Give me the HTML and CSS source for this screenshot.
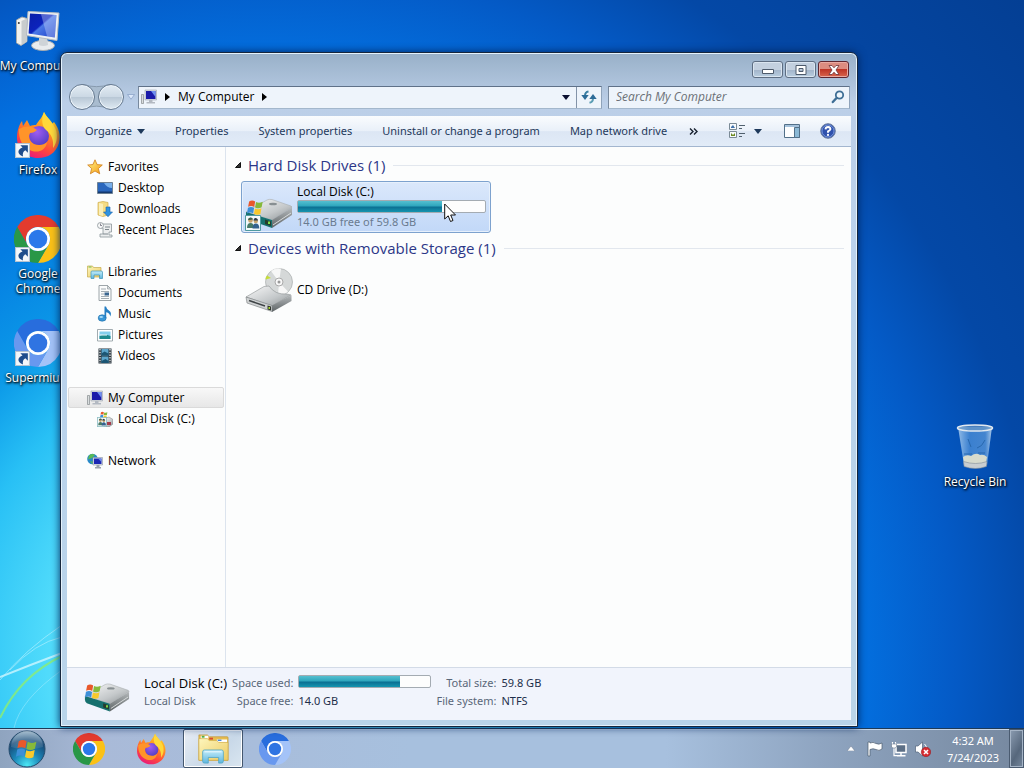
FILE: index.html
```html
<!DOCTYPE html>
<html lang="en">
<head>
<meta charset="utf-8">
<title>My Computer</title>
<link rel="stylesheet" href="styles.css">
</head>
<body>
<svg class="sprites" aria-hidden="true">
  <defs>
    <linearGradient id="g-screen" x1="0" y1="0" x2="1" y2="1"><stop offset="0" stop-color="#0a1fa8"/><stop offset=".45" stop-color="#0c23bd"/><stop offset=".5" stop-color="#4a78e6"/><stop offset="1" stop-color="#1b3cc8"/></linearGradient>
    <linearGradient id="g-metal" x1="0" y1="0" x2="1" y2="1"><stop offset="0" stop-color="#fafafa"/><stop offset=".6" stop-color="#c4c8ca"/><stop offset="1" stop-color="#8d9294"/></linearGradient>
    <linearGradient id="g-dark" x1="0" y1="0" x2="0" y2="1"><stop offset="0" stop-color="#b5b9bb"/><stop offset="1" stop-color="#5d6365"/></linearGradient>
    <linearGradient id="g-fox" x1=".8" y1="0" x2=".3" y2="1"><stop offset="0" stop-color="#ffe226"/><stop offset=".35" stop-color="#ff9a1f"/><stop offset=".7" stop-color="#ff4a3a"/><stop offset="1" stop-color="#e8187c"/></linearGradient>
    <radialGradient id="g-globe" cx=".4" cy=".3" r=".8"><stop offset="0" stop-color="#a05cf0"/><stop offset="1" stop-color="#4a3cc0"/></radialGradient>
    <radialGradient id="g-orb" cx=".5" cy=".95" r=".95"><stop offset="0" stop-color="#4ce8f5"/><stop offset=".4" stop-color="#1b86b8"/><stop offset=".75" stop-color="#174b78"/><stop offset="1" stop-color="#5c88a8"/></radialGradient>
    <linearGradient id="g-gloss" x1="0" y1="0" x2="0" y2="1"><stop offset="0" stop-color="#fff" stop-opacity=".75"/><stop offset="1" stop-color="#fff" stop-opacity=".1"/></linearGradient>
    <linearGradient id="g-folder" x1="0" y1="0" x2="1" y2="1"><stop offset="0" stop-color="#fdf6bd"/><stop offset="1" stop-color="#eccb63"/></linearGradient>
    <linearGradient id="g-tray" x1="0" y1="0" x2="0" y2="1"><stop offset="0" stop-color="#c3edfa"/><stop offset="1" stop-color="#5fb6dd"/></linearGradient>
    <linearGradient id="g-star" x1="0" y1="0" x2="1" y2="1"><stop offset="0" stop-color="#fff58a"/><stop offset="1" stop-color="#f59a12"/></linearGradient>
    <linearGradient id="g-bin" x1="0" y1="0" x2="1" y2="0"><stop offset="0" stop-color="#c3dff6" stop-opacity=".75"/><stop offset=".35" stop-color="#5f9fe0" stop-opacity=".6"/><stop offset=".8" stop-color="#6faae4" stop-opacity=".6"/><stop offset="1" stop-color="#d4e8f8" stop-opacity=".8"/></linearGradient>
    <symbol id="flag" viewBox="0 0 20 20">
      <path fill="#e8582b" d="M2.5 3Q6 .6 9.6 3L8.500 9.400Q5 7.300 1.300 9.200Z"/><path fill="#86b93a" d="M10.600 3.500Q14 5.500 18.500 3.300L17.200 9.800Q13.500 12 9.500 9.900Z"/>
      <path fill="#3d8fd8" d="M1.100 10.400Q5 8.500 8.300 10.600L7.200 17Q4 15 0 17Z"/><path fill="#f8c92c" d="M9.300 11.100Q13 13 17 11L15.800 17.500Q12 19.400 8.200 17.300Z"/>
    </symbol>
    <symbol id="pc" viewBox="0 0 48 48">
      <path fill="#f1f1ee" stroke="#a5a9ab" d="M2.500 13 8 10l5 1.500v23L7 38.500 2.500 36Z"/><path fill="#c8cccd" d="M7.500 14 13 11.500v23l-5.500 3.500Z"/><circle cx="4.800" cy="16" r="1" fill="#333"/>
      <ellipse cx="29" cy="38.500" rx="11.500" ry="5" fill="#e9ecee" stroke="#a5abb0"/><path fill="#cfd4d8" d="M25 30h8l1 8q-5 2-9 0Z"/>
      <path fill="#eef1f3" stroke="#b5bbc2" d="M14 4.500 45 6 43 33.500 12.500 28.500Z"/><path fill="url(#g-screen)" d="M16 6.500 42.500 8 40.800 30.500 14.600 26.600Z"/><path fill="#dce6ff" opacity=".35" d="M27 7.300 42.500 8 40.800 30.500 33 29.300Z"/>
    </symbol>
    <symbol id="pc16" viewBox="0 0 16 16">
      <path fill="#d9ddde" stroke="#858b8e" stroke-width=".7" d="M.5 5.500h2v9h-2Z"/><path fill="#d9dde2" stroke="#9da4b0" stroke-width=".6" d="M4 1h11.500v10H4Z"/><path fill="#1a1aa8" d="M5 2h9.500v8H5Z"/><path fill="#6f8ff0" d="M10 2h4.500v6Z"/><path fill="#b3b9c2" d="M8 11h3.500v2H14v1.500H5.500V13H8Z"/>
    </symbol>
    <symbol id="firefox" viewBox="0 0 48 48">
      <path fill="url(#g-fox)" d="M30 1c2 5 7 8 8 12l2-2c5 7 7 13 5 21-3 10-11 15-21 15C12 47 3 38 3 27c0-7 2-13 5-17l1 5 4-6 3 6c2-1 4-1 6-1 3-5 6-7 8-13Z"/>
      <circle cx="25" cy="25" r="10" fill="url(#g-globe)"/><path fill="#ff9429" d="M5 18c7-4 13-3 18 1-2 2-4 3-7 3-2 3-1 8 4 11 5 2 10 1 13-2-1 8-8 11-15 9C9 37 4 28 5 18Z"/><path fill="#ffd83a" d="M30 1c2 5 8 9 10 14 5 8 3 17-1 22 1-9-2-14-7-18-4-4-5-10-2-18Z"/>
    </symbol>
    <symbol id="chrome" viewBox="0 0 48 48">
      <path fill="#e33b2e" d="M3.200 12A24 24 0 0 1 44.800 12H24A12 12 0 0 0 13.600 30Z"/><path fill="#fbc116" d="M44.800 12A24 24 0 0 1 24 48L34.400 30A12 12 0 0 0 24 12Z"/><path fill="#299747" d="M24 48A24 24 0 0 1 3.200 12L13.600 30A12 12 0 0 0 34.400 30Z"/><circle cx="24" cy="24" r="12" fill="#fff"/><circle cx="24" cy="24" r="9.300" fill="#2b78ea"/>
    </symbol>
    <symbol id="supermium" viewBox="0 0 48 48">
      <path fill="#286ddd" d="M3.200 12A24 24 0 0 1 44.800 12H24A12 12 0 0 0 13.600 30Z"/><path fill="#a4c3f8" d="M44.800 12A24 24 0 0 1 24 48L34.400 30A12 12 0 0 0 24 12Z"/><path fill="#6898ef" d="M24 48A24 24 0 0 1 3.200 12L13.600 30A12 12 0 0 0 34.400 30Z"/><circle cx="24" cy="24" r="12" fill="#fff"/><circle cx="24" cy="24" r="9.300" fill="#2f74e2"/>
    </symbol>
    <symbol id="shortcut" viewBox="0 0 14 14"><path fill="#f4f7fa" stroke="#b5c3d0" d="M.5.5h13v13H.5Z"/><path fill="#1f4d8c" d="M5 2h7v7L9.700 6.700Q6.500 8.500 7.500 12.500 3 11 3.200 8 3.500 5.500 7 4.200Z"/></symbol>
    <symbol id="drive" viewBox="0 0 48 32">
      <path fill="url(#g-metal)" stroke="#a8adaf" stroke-width=".6" d="M1 15 22 3q2-1 5-.5L46 9q2 1 0 2L27 23Z"/><path fill="#16706e" d="M1 15 27 23v8L3 22.500Q1 21 1 19Z"/><path fill="url(#g-dark)" d="M27 23 47 10.500V18L27 31Z"/><path fill="#263c2d" d="M20 22.500l6 2v4.500l-6-2Z"/><path fill="#7fe04a" d="M23 24.500h2v2.500h-2Z"/><ellipse cx="28" cy="7" rx="4" ry="1.300" fill="#888f92"/><path fill="none" stroke="#d9dcdd" d="M28 28 46 16"/>
    </symbol>
    <symbol id="users" viewBox="0 0 16 16"><path fill="#f4f9fb" stroke="#4f9aa0" d="M.5.500h15v15H.5Z"/><circle cx="5.500" cy="5.500" r="2.300" fill="#c7a46e"/><path fill="#47604a" d="M3 5q0-3 3-2.500 2 .5 2 2L5 5Z"/><path fill="#487a68" d="M2 13q0-5 3.500-5T9 13Z"/><circle cx="10.800" cy="6" r="2.200" fill="#c7a46e"/><path fill="#2d3c48" d="M8.500 5.500q0-3 2.500-2.500 2 .5 2 2.500Z"/><path fill="#34628e" d="M7.500 13.500q0-5 3.400-5t3.400 5Z"/></symbol>
    <symbol id="cd" viewBox="0 0 48 48">
      <circle cx="34" cy="16" r="13.500" fill="#d5d8d8" stroke="#a9adae" stroke-width=".7"/><path fill="#fff" opacity=".8" d="M34 16 26 5q5-4 10-2.300ZM34 16l9 9.500q-4 4-10 4Z"/><path fill="#c5de36" d="M26 12 22 9.500q-1.500 2-1.500 4Z"/><circle cx="34" cy="16" r="4" fill="#f8f8f8" stroke="#aaa"/><circle cx="34" cy="16" r="1.500" fill="#999"/>
      <path fill="url(#g-metal)" stroke="#8b9092" stroke-width=".6" d="M1 31 19 20.500l5-.5Q30 29 42 28l4 1-19 11Z"/><path fill="#cfd2d3" stroke="#777c7e" stroke-width=".6" d="M1 31 27 39.500v6L2 37Z"/><path fill="url(#g-dark)" d="M27 39.500 46.500 29v6L27 46Z"/><path stroke="#3e4345" stroke-width="1.500" d="M4 34.500 20 40"/><path fill="#30362f" d="M22.500 39.500l3.500 1v4l-3.500-1Z"/><path fill="#a8d92c" d="M23.500 41h1.500v2h-1.500Z"/>
    </symbol>
    <symbol id="star" viewBox="0 0 16 16"><path fill="url(#g-star)" stroke="#cf7d19" stroke-width=".8" d="M8 .8 10.100 5.600 15.300 6 11.400 9.500 12.700 14.800 8 12 3.400 14.800 4.600 9.500.7 6l5.200-.4Z"/></symbol>
    <symbol id="desktop" viewBox="0 0 16 16"><path fill="#2a67bd" stroke="#6d8194" d="M.5 2.500h15v11H.5Z"/><path fill="#78afea" d="M7 3h8v5Q10 8 7 3Z"/><path fill="#14396f" d="M1 11.500h14V13H1Z"/></symbol>
    <symbol id="downloads" viewBox="0 0 16 16"><path fill="#f5dc84" stroke="#cfac4a" stroke-width=".7" d="M1 1.500 6 .5l5 1V14l-5 1.500L1 14Z"/><path fill="#fbefb9" d="M2 2 6 3v12l-4-1Z"/><path fill="#2f93e0" stroke="#1a62ad" stroke-width=".6" d="M9 6h4v5h2.500L11 15.700 6.500 11H9Z"/></symbol>
    <symbol id="recent" viewBox="0 0 16 16"><path fill="#eceeef" stroke="#8b9499" stroke-width=".8" d="M5 2h9.500v8H12v3h3v2H3v-3h3V6H4Z"/><path stroke="#7d878d" d="M8 5h5M8 7.500h4M6 12h5"/><circle cx="3.500" cy="3.500" r="3" fill="#f7f8f8" stroke="#8b9499" stroke-width=".8"/><path fill="none" stroke="#556" stroke-width=".7" d="M3.500 1.500v2h1.500"/></symbol>
    <symbol id="library" viewBox="0 0 16 16"><path fill="url(#g-folder)" stroke="#c5aa4d" stroke-width=".7" d="M.5 2h5l1 1.500H14V13H.5Z"/><path fill="#6dbb45" d="M1.500 2.500h3v1h-3Z"/><path fill="url(#g-tray)" stroke="#3d94b8" stroke-width=".7" d="M4 8q0-1 1-1h9q1.500 0 1.500 1v6.500h-3V11H7v3.500H4Z"/></symbol>
    <symbol id="document" viewBox="0 0 16 16"><path fill="#fbfcfc" stroke="#858f94" stroke-width=".8" d="M2 .5h8.500L14 4v11.500H2Z"/><path fill="#dde1e3" stroke="#858f94" stroke-width=".6" d="M10.500.5V4H14Z"/><path stroke="#8d989f" stroke-width=".8" d="M4 4h5M4 6.500h8M4 9h3M4 11.500h8M4 13.500h8"/><path fill="#39658f" d="M7.500 7.500H12v3H7.500Z"/></symbol>
    <symbol id="music" viewBox="0 0 16 16"><ellipse cx="5.200" cy="12" rx="4" ry="3.200" fill="#3a98d8" stroke="#1e6da8" stroke-width=".6"/><path fill="#257fc4" d="M7.500.5H9q.5 3 3.500 4.500 2.500 2 .7 5.500Q13 7 9.200 6.200V12H7.500Z"/><ellipse cx="4.200" cy="11" rx="1.800" ry="1" fill="#a8dcf8"/></symbol>
    <symbol id="picture" viewBox="0 0 16 16"><path fill="#fff" stroke="#8a979d" stroke-width=".8" d="M.5 2.500h15v11.500H.5Z"/><path fill="#84cfec" d="M2.500 4.500h11v7.500h-11Z"/><path fill="#1d8a8e" d="M2.500 9Q7 6.500 13.500 9v3h-11Z"/><path fill="#eef8fa" d="M3 7.500h7v1H3Z"/></symbol>
    <symbol id="video" viewBox="0 0 16 16"><path fill="#27323a" d="M1.500.5h13v15h-13Z"/><path fill="#5ca5cb" d="M4.500 1h7v6.500h-7ZM4.500 8.500h7V15h-7Z"/><path fill="#1c5674" d="M4.500 5.500l3-2 4 2v2h-7ZM4.500 13l4-2 3 2v2h-7Z"/><path stroke="#e5eaec" stroke-width="1.300" stroke-dasharray="1.500 1.200" d="M3 1v14M13 1v14"/></symbol>
    <symbol id="disk16" viewBox="0 0 16 16"><use href="#flag" x="3" width="8" height="8"/><path fill="url(#g-metal)" stroke="#7d8385" stroke-width=".5" d="M6 8l6-2 4 2.500V13l-4 3H7Z"/><path fill="#a63c4a" d="M10 11h4v3h-4Z"/><use href="#users" y="6" width="10" height="10"/></symbol>
    <symbol id="network" viewBox="0 0 16 16"><circle cx="5.500" cy="6" r="5.300" fill="#2688c8"/><path fill="#59b955" d="M2 2.500Q5 0 8 2L5 5 1 6.500ZM3 8l3 1-1 2Z"/><path fill="#e2e6ea" stroke="#8892a0" stroke-width=".6" d="M6 4.500h9.500V12H6Z"/><path fill="#1c28b5" d="M7 5.500h7.500V11H7Z"/><path fill="#6e8bec" d="M11 5.500h3.500V9Z"/><path fill="#9aa3ad" d="M9.500 12h3v2H14v1.500H8V14h1.500Z"/></symbol>
    <symbol id="bin" viewBox="0 0 48 48">
      <path fill="url(#g-bin)" d="M7 4H41L36 42q-12 6-23 0Z"/><path fill="#e8e4cc" opacity=".9" d="M12 34q4-3 8-1 5-4 9-1 4-1 7 2l-1 6q-11 4-22 0Z"/><path fill="#c9ced1" stroke="#818d99" stroke-width=".6" d="M12.500 38.500q12 4 23.500 0l-.6 5q-11 4-22.300 0Z"/><ellipse cx="24" cy="5" rx="17.500" ry="3" fill="#739dc5" fill-opacity=".6" stroke="#e1e8ef" stroke-width="1.500"/><path stroke="#2868ae" fill="none" d="M17 16l3 8M34 17q-3 7-8 8M13 31h8M27 30h7"/>
    </symbol>
    <symbol id="explorer" viewBox="0 0 34 34"><path fill="#e6bd4f" stroke="#bf9637" stroke-width=".7" d="M2 2h9l2 2h19q1 0 1 1v24H2Z"/><path fill="#fff" d="M4 3h8v3H4ZM21 7h11v3H21Z"/><path fill="#52b043" d="M5 3h3v2H5Z"/><path fill="#d94b2e" d="M13 5h4v2h-4Z"/><path fill="#4a8ad6" d="M22 7h4v1.500h-4Z"/><path fill="url(#g-folder)" stroke="#d1ac46" stroke-width=".7" d="M2 6h9l2 2h8l2 2h10v19H2Z"/><path fill="url(#g-tray)" stroke="#4aa3c6" stroke-width=".8" d="M6 20q0-2 2-2h18q2 0 2 2v10q0 2-2 2h-3v-6H12v6H8q-2 0-2-2Z"/><path stroke="#effbff" d="M8 20h18"/></symbol>
    <symbol id="orb" viewBox="0 0 38 38"><circle cx="19" cy="19" r="18" fill="url(#g-orb)" stroke="#254b6c"/><path fill="url(#g-gloss)" opacity=".6" d="M3 17A16 16 0 0 1 35 17Q19 22 3 17Z"/><use href="#flag" x="8" y="8" width="22" height="22"/></symbol>
  </defs>
</svg>

<main class="desktop">
  <svg class="rays" viewBox="0 0 1024 728" preserveAspectRatio="none" aria-hidden="true">
    <g fill="none"><path stroke="#d8f8ff" stroke-opacity=".75" stroke-width="2" d="M0 677Q30 665 62 653"/><path stroke="#c5f4ff" stroke-opacity=".55" d="M0 680Q25 650 62 625M10 670Q35 643 62 637"/><path stroke="#8cee73" stroke-opacity=".8" stroke-width="2" d="M0 718Q20 676 62 656"/><path stroke="#bff3ff" stroke-opacity=".4" d="M14 728Q20 700 62 670"/></g>
  </svg>

  <nav class="shortcuts" aria-label="Desktop icons">
    <a class="shortcut" href="#"><span class="shortcut-art"><svg><use href="#pc"/></svg></span><span>My Computer</span></a>
    <a class="shortcut" href="#"><span class="shortcut-art"><svg><use href="#firefox"/></svg><svg class="badge"><use href="#shortcut"/></svg></span><span>Firefox</span></a>
    <a class="shortcut" href="#"><span class="shortcut-art"><svg><use href="#chrome"/></svg><svg class="badge"><use href="#shortcut"/></svg></span><span>Google<br>Chrome</span></a>
    <a class="shortcut" href="#"><span class="shortcut-art"><svg><use href="#supermium"/></svg><svg class="badge"><use href="#shortcut"/></svg></span><span>Supermium</span></a>
  </nav>
  <a class="shortcut recycle" href="#"><span class="shortcut-art"><svg><use href="#bin"/></svg></span><span>Recycle Bin</span></a>

  <section class="window" aria-label="My Computer">
    <header class="titlebar">
      <button class="caption" aria-label="Minimize"><svg viewBox="0 0 12 10"><path fill="#fff" stroke="#4d5a6b" d="M.5 4.500h11v4H.5Z"/></svg></button>
      <button class="caption" aria-label="Maximize"><svg viewBox="0 0 12 10"><path fill="#fff" stroke="#4d5a6b" fill-rule="evenodd" d="M1 .5h10v9H1ZM4 3.500v3h4v-3Z"/></svg></button>
      <button class="caption close" aria-label="Close"><svg viewBox="0 0 12 10"><path fill="#fff" stroke="#6b3238" stroke-width=".8" d="M1 .5h3L6 2.800 8 .5h3L8 5l3 4.500H8L6 7.200 4 9.500H1L4 5Z"/></svg></button>
    </header>

    <div class="navbar">
      <div class="travel">
        <svg class="travel-plate" viewBox="0 0 54 27" aria-hidden="true"><path fill="#a9bccf" stroke="#8598ac" d="M13 .5Q27 5 41 .5V26Q27 20 13 26Z"/></svg>
        <button class="travel-btn" aria-label="Back"></button>
        <button class="travel-btn" aria-label="Forward"></button>
      </div>
      <button class="recent-pages" aria-label="Recent pages"><svg viewBox="0 0 8 6"><path fill="#dce9fa" stroke="#8ba3c8" stroke-width=".8" d="M.5.5h7L4 5.300Z"/></svg></button>
      <div class="address">
        <svg class="i16"><use href="#pc16"/></svg>
        <svg class="arrow-right" viewBox="0 0 5 8"><path d="M0 0 5 4 0 8Z"/></svg>
        <button class="crumb">My Computer</button>
        <svg class="arrow-right" viewBox="0 0 5 8"><path d="M0 0 5 4 0 8Z"/></svg>
        <button class="address-drop" aria-label="Previous locations"><svg class="arrow-down" viewBox="0 0 8 5"><path d="M0 0h8L4 5Z"/></svg></button>
        <button class="refresh" aria-label="Refresh"><svg class="i16" viewBox="0 0 16 16"><path fill="none" stroke="#3a7fa3" stroke-width="2" d="M7.500 2.500Q4 3 4 7"/><path fill="#2d6c98" d="M.3 6h7.400L4 11Z"/><path fill="none" stroke="#5b9db4" stroke-width="2" d="M8.500 13.800Q12 13 12 9.500"/><path fill="#2d6c98" d="M8.300 10h7.400L12 5Z"/></svg></button>
      </div>
      <label class="search">
        <input type="search" placeholder="Search My Computer" aria-label="Search My Computer">
        <svg class="i14" viewBox="0 0 14 14"><circle cx="8.500" cy="5" r="3.700" fill="#eef6fc" stroke="#3f6f96" stroke-width="1.800"/><path stroke="#3f6f96" stroke-width="2.400" stroke-linecap="round" d="M5.500 8 1.800 12"/></svg>
      </label>
    </div>

    <div class="toolbar">
      <button>Organize <svg class="arrow-down" viewBox="0 0 8 5"><path d="M0 0h8L4 5Z"/></svg></button>
      <button>Properties</button>
      <button>System properties</button>
      <button>Uninstall or change a program</button>
      <button>Map network drive</button>
      <button class="more" aria-label="More commands"><svg viewBox="0 0 9 7"><path fill="none" stroke="#17202e" stroke-width="1.400" d="M1 .5l3 3-3 3M5 .5l3 3-3 3"/></svg></button>
      <div class="toolbar-end">
        <button aria-label="Change your view"><svg class="i16" viewBox="0 0 16 16"><path fill="#f7fafd" stroke="#7a8a96" d="M.5.5h7v6h-7ZM.5 8.500h7v6h-7Z"/><path fill="#3f71aa" d="M2 4l2-2 2 3H2Z"/><path fill="#6c8b22" d="M2 10l2 2 2-2v3H2Z"/><path stroke="#50606e" d="M10 2.500h6M10 5.500h3M10 10.500h6M10 13.500h3"/></svg></button>
        <button class="view-drop" aria-label="More view options"><svg class="arrow-down" viewBox="0 0 8 5"><path d="M0 0h8L4 5Z"/></svg></button>
        <button class="preview" aria-label="Show the preview pane"><svg class="i16" viewBox="0 0 16 16"><path fill="#fdfeff" stroke="#527089" d="M.5 1.500h15v13H.5Z"/><path fill="#8bb9d6" stroke="#527089" d="M10.500 4.500h5v10h-5Z"/><path stroke="#a5c2dc" stroke-width="2" d="M1 3h14"/></svg></button>
        <button aria-label="Get help"><svg class="i16" viewBox="0 0 16 16"><circle cx="8" cy="8" r="7.300" fill="#2f51ad" stroke="#6d7f9f"/><circle cx="8" cy="8" r="6" fill="none" stroke="#88a6e5" stroke-width=".8"/><path fill="none" stroke="#fff" stroke-width="1.900" d="M5.500 6.300Q5.700 4 8.100 4 10.500 4.200 10.400 6.200 10 7.500 8 8.300V9.800"/><circle cx="8" cy="11.900" r="1.100" fill="#fff"/></svg></button>
      </div>
    </div>

    <div class="body">
      <nav class="tree" aria-label="Navigation pane">
        <ul>
          <li><a href="#"><svg class="i16"><use href="#star"/></svg>Favorites</a></li>
          <li class="child"><a href="#"><svg class="i16"><use href="#desktop"/></svg>Desktop</a></li>
          <li class="child"><a href="#"><svg class="i16"><use href="#downloads"/></svg>Downloads</a></li>
          <li class="child"><a href="#"><svg class="i16"><use href="#recent"/></svg>Recent Places</a></li>
        </ul>
        <ul>
          <li><a href="#"><svg class="i16"><use href="#library"/></svg>Libraries</a></li>
          <li class="child"><a href="#"><svg class="i16"><use href="#document"/></svg>Documents</a></li>
          <li class="child"><a href="#"><svg class="i16"><use href="#music"/></svg>Music</a></li>
          <li class="child"><a href="#"><svg class="i16"><use href="#picture"/></svg>Pictures</a></li>
          <li class="child"><a href="#"><svg class="i16"><use href="#video"/></svg>Videos</a></li>
        </ul>
        <ul>
          <li class="current"><a href="#" aria-current="page"><svg class="i16"><use href="#pc16"/></svg>My Computer</a></li>
          <li class="child"><a href="#"><svg class="i16"><use href="#disk16"/></svg>Local Disk (C:)</a></li>
        </ul>
        <ul>
          <li><a href="#"><svg class="i16"><use href="#network"/></svg>Network</a></li>
        </ul>
      </nav>

      <div class="files">
        <h2><svg class="expander" viewBox="0 0 8 8"><path d="M6.500 1.500v5h-5Z"/></svg>Hard Disk Drives (1)</h2>
        <a class="tile selected" href="#">
          <svg class="tile-icon" viewBox="0 0 48 48"><use href="#drive" x="0" y="14" width="48" height="32"/><use href="#flag" x="2" y="16" width="17" height="17"/><use href="#users" x="0" y="32" width="16" height="16"/></svg>
          <span class="tile-text">
            <span>Local Disk (C:)</span>
            <span class="meter"><span class="meter-fill" style="width:77%"></span></span>
            <span class="muted">14.0 GB free of 59.8 GB</span>
          </span>
        </a>
        <h2><svg class="expander" viewBox="0 0 8 8"><path d="M6.500 1.500v5h-5Z"/></svg>Devices with Removable Storage (1)</h2>
        <a class="tile" href="#">
          <svg class="tile-icon"><use href="#cd"/></svg>
          <span class="tile-text"><span>CD Drive (D:)</span></span>
        </a>
      </div>
    </div>

    <footer class="details">
      <svg class="details-icon" viewBox="0 0 48 36"><use href="#drive" x="1" y="2" width="46" height="32"/><use href="#flag" x="2" y="4" width="17" height="17"/></svg>
      <div class="details-grid">
        <strong>Local Disk (C:)</strong><span class="key">Space used:</span><span class="meter"><span class="meter-fill" style="width:77%"></span></span><span class="key">Total size:</span><span>59.8 GB</span>
        <span class="kind">Local Disk</span><span class="key">Space free:</span><span>14.0 GB</span><span class="key">File system:</span><span>NTFS</span>
      </div>
    </footer>
  </section>

  <svg class="cursor" viewBox="0 0 13 20" aria-hidden="true"><path fill="#fff" stroke="#111" d="M.7 1V16L4.200 12.800 6.500 18.500 9 17.500 6.700 12H11.500Z"/></svg>
</main>

<footer class="taskbar">
  <button class="start" aria-label="Start"><svg><use href="#orb"/></svg></button>
  <div class="tasks">
    <button class="task" aria-label="Google Chrome"><svg><use href="#chrome"/></svg></button>
    <button class="task" aria-label="Firefox"><svg><use href="#firefox"/></svg></button>
    <button class="task active" aria-label="Windows Explorer"><svg><use href="#explorer"/></svg></button>
    <button class="task" aria-label="Supermium"><svg><use href="#supermium"/></svg></button>
  </div>
  <div class="tray">
    <button class="tray-more" aria-label="Show hidden icons"><svg viewBox="0 0 8 5"><path fill="#fff" stroke="#66778e" stroke-width=".5" d="M0 5 4 0l4 5Z"/></svg></button>
    <button aria-label="Action Center"><svg class="i16" viewBox="0 0 16 16"><path fill="#fff" stroke="#4c5b6e" stroke-width=".7" d="M1 1h2v1q3-1.500 6 .5 3 1.500 6-.5v6q-3 2.500-6 .5-3-1.500-6 0V15H1Z"/></svg></button>
    <button aria-label="Network"><svg class="i16" viewBox="0 0 16 16"><path fill="#5c6f86" stroke="#fff" stroke-width="1.500" d="M5 3.500h10v8H5Z"/><path stroke="#fff" stroke-width="1.500" d="M10 11.500v3M6 14.700h8.500"/><path fill="none" stroke="#fff" stroke-width="1.200" d="M1.500 1v3M4.500 1v3M3 6v8.700h3"/><path fill="#fff" stroke="#54667c" stroke-width=".5" d="M.5 3h5v3l-1.500 1h-2L.5 6Z"/></svg></button>
    <button aria-label="Volume muted"><svg class="i16" viewBox="0 0 16 16"><path fill="#fff" stroke="#50627a" stroke-width=".7" d="M.5 5H3L7.500 1v14L3 11H.5Z"/><path fill="none" stroke="#fff" d="M9.500 3q2 2 2 4"/><circle cx="11" cy="11" r="4.700" fill="#d72c31" stroke="#981d22" stroke-width=".6"/><path stroke="#fff" stroke-width="1.600" d="M9 9l4 4M13 9l-4 4"/></svg></button>
  </div>
  <button class="clock"><span>4:32 AM</span><span>7/24/2023</span></button>
  <button class="show-desktop" aria-label="Show desktop"></button>
</footer>
</body>
</html>
```
FILE: styles.css
```css
* { box-sizing: border-box; }

body {
  margin: 0;
  height: 100vh;
  display: flex;
  flex-direction: column;
  overflow: hidden;
  font: 12px/16px "Open Sans", "Noto Sans", sans-serif;
  color: #000;
}

button {
  padding: 0;
  border: 0;
  background: none;
  font: inherit;
  color: inherit;
  white-space: nowrap;
}

a { color: inherit; text-decoration: none; }
svg { display: block; flex: none; }
ul { margin: 0; padding: 0; list-style: none; }

.sprites { position: absolute; width: 0; height: 0; }
.i16 { width: 16px; height: 16px; }
.i14 { width: 14px; height: 14px; }
.arrow-right { width: 5px; height: 8px; }
.arrow-down { width: 8px; height: 5px; }
.arrow-down path { fill: currentColor; }

/* Desktop */
.desktop {
  flex: 1;
  position: relative;
  min-height: 0;
  background: radial-gradient(circle at 26% 90%, #6ae4ff 0, #50dbfb 220px, #28c0f5 310px, #0c9ae8 380px, #047de2 480px, #0370e0 590px, #045ac6 690px, #0448a6 780px, #043f94 1000px);
}

.rays { position: absolute; inset: 0; width: 100%; height: 100%; }

.shortcuts { position: absolute; left: 0; top: 7px; width: 76px; }

.shortcut {
  display: flex;
  flex-direction: column;
  align-items: center;
  gap: 3px;
  height: 104px;
  line-height: 15px;
  text-align: center;
  white-space: nowrap;
  color: #fff;
  text-shadow: 1px 1px 2px #000, 0 1px 3px #000;
}

.shortcut-art { position: relative; }
.shortcut-art svg { width: 48px; height: 48px; }
.shortcut-art .badge { position: absolute; left: 1px; bottom: 1px; width: 15px; height: 15px; }
.recycle { position: absolute; right: 11px; top: 423px; width: 76px; }

/* Window frame */
.window {
  position: absolute;
  inset: 52px 166px 1px 60px;
  display: flex;
  flex-direction: column;
  padding: 0 6px 6px;
  border: 1px solid #16263c;
  border-radius: 7px 7px 0 0;
  box-shadow: inset 0 0 0 1px #e4f2fc, 0 0 8px #00245c;
  background: linear-gradient(#98b0c8, #bccfe8 50px, #bad2ec 200px, #b9d4e9);
}

.titlebar { display: flex; justify-content: flex-end; gap: 2px; padding: 8px 2px 0 0; }

.caption {
  display: grid;
  place-items: center;
  width: 31px;
  height: 17px;
  border: 1px solid #5d6d82;
  border-radius: 3px;
  box-shadow: inset 0 0 0 1px #dae5f0;
  background: linear-gradient(#c3d0df 50%, #a1b3c9 50%, #b9cee0);
}

.caption svg { width: 12px; height: 10px; }
.close { border-color: #5e2630; box-shadow: inset 0 0 0 1px #e9aaa2; background: linear-gradient(#dc8c80 45%, #be3526 50%, #d8664e); }

.navbar { display: flex; align-items: center; padding: 6px 1px 6px 2px; }
.travel { position: relative; display: flex; gap: 3px; }
.travel-plate { position: absolute; inset: 0; width: 100%; height: 100%; }

.travel-btn {
  position: relative;
  width: 26px;
  height: 26px;
  border: 1px solid #667a90;
  border-radius: 50%;
  box-shadow: inset 0 0 0 1px #eef5fb;
  background: linear-gradient(#e2ebf3, #cbd8e4 50%, #b9c8d6 52%, #dfeaf3);
}

.recent-pages { padding: 0 3px; }
.recent-pages svg { width: 8px; height: 6px; }

.address, .search {
  display: flex;
  align-items: center;
  height: 23px;
  border: 1px solid;
  border-color: #5f7188 #8fa3ba #a3b7cc #78899e;
  background: #eef4fb;
}

.address { flex: 1; margin-right: 6px; padding-left: 2px; gap: 8px; }
.address-drop { margin-left: auto; color: #0b1030; padding: 4px 0; }
.refresh { display: grid; place-items: center; align-self: stretch; width: 25px; margin-left: -2px; border-left: 1px solid #8393a8; }

.search { width: 242px; padding: 0 4px 0 7px; }

.search input {
  flex: 1;
  min-width: 0;
  padding: 0;
  border: 0;
  outline: 0;
  background: none;
  font: italic 12px/16px "Open Sans", "Noto Sans", sans-serif;
}

.search input::placeholder { color: #6b7076; opacity: 1; }

/* Command bar */
.toolbar {
  display: flex;
  align-items: center;
  gap: 30px;
  height: 31px;
  padding: 0 15px 0 18px;
  border-bottom: 1px solid #a3b6cf;
  background: linear-gradient(#fafcfe, #e9f0f9 50%, #dce6f4 52%, #e2ecf8);
  font-family: "Noto Sans", "Open Sans", sans-serif;
  font-size: 11px;
  color: #1e395b;
}

.toolbar button { display: flex; align-items: center; gap: 5px; }
.toolbar .more { margin-left: -8px; }
.more svg { width: 9px; height: 7px; }
.toolbar-end { display: flex; align-items: center; margin-left: auto; }
.toolbar .view-drop { margin: 0 22px 0 9px; }
.toolbar .preview { margin-right: 20px; }

/* Panes */
.body { flex: 1; display: flex; min-height: 0; background: #fcfdfd; }
.tree { width: 159px; flex: none; padding: 9px 1px; border-right: 1px solid #dce4ee; }
.tree ul + ul { margin-top: 21px; }
.tree a { display: flex; align-items: center; gap: 5px; height: 21px; padding-left: 18px; border: 1px solid transparent; border-radius: 2px; }
.tree .child a { padding-left: 28px; }
.tree .current a { border-color: #dadada; background: linear-gradient(#f8f8f8, #e7e7e7); }

.files { flex: 1; min-width: 0; padding: 7px 7px 0 8px; }

h2 {
  display: flex;
  align-items: center;
  gap: 6px;
  margin: 0;
  font-size: 15px;
  font-weight: 400;
  line-height: 22px;
  color: #2c3788;
}

h2::after { content: ""; flex: 1; height: 1px; margin-left: 2px; background: #e2e7ee; }
.expander { width: 8px; height: 8px; fill: #333; stroke: #111; }

.tile {
  display: flex;
  align-items: center;
  gap: 4px;
  width: 250px;
  height: 52px;
  margin: 5px 0 4px 7px;
  padding: 0 4px 0 3px;
  border: 1px solid transparent;
  border-radius: 3px;
}

.tile.selected { border-color: #7da2ce; box-shadow: inset 0 0 0 1px #e6f0fc; background: linear-gradient(#dbe8fb, #c2d8f8); }
.tile-icon { width: 48px; height: 48px; }
.tile-text { flex: 1; display: flex; flex-direction: column; }
.muted { font-family: "Noto Sans", "Open Sans", sans-serif; font-size: 11px; line-height: 18px; color: #6a7b90; }

.meter {
  display: block;
  height: 13px;
  border: 1px solid #a4abb2;
  border-radius: 2px;
  background: #fdfdfd;
}

.meter-fill { display: block; height: 100%; background: linear-gradient(#55bfd0, #2fa6bd 45%, #0c6f92 55%, #1595b0); }

/* Details pane */
.details {
  display: flex;
  align-items: center;
  gap: 13px;
  height: 53px;
  padding: 0 16px;
  border-top: 1px solid #d3dbe7;
  background: #f1f4fc;
  font-family: "Noto Sans", "Open Sans", sans-serif;
  font-size: 11px;
  color: #1e2f4b;
}

.details-icon { width: 48px; height: 36px; margin-top: 5px; }
.details-grid { display: grid; grid-template-columns: auto auto 133px auto auto; gap: 2px 5px; align-items: center; padding-bottom: 4px; white-space: nowrap; }
.details-grid .meter { align-self: start; }
.details-grid strong { font-family: "Open Sans", "Noto Sans", sans-serif; font-size: 13px; font-weight: 400; color: #000; }
.details-grid .key { text-align: right; color: #5a6779; }
.details-grid .kind { color: #5a6779; }

.cursor { position: absolute; left: 444px; top: 203px; width: 13px; height: 20px; }

/* Taskbar */
.taskbar {
  display: flex;
  align-items: stretch;
  height: 40px;
  border-top: 1px solid #1e3a57;
  box-shadow: inset 0 1px #c4d5e8;
  background: linear-gradient(90deg, #8fa4bf, #a9bad8 10%, #a7c0de 40%, #a7c0de 65%, #8fa5c1 80%, #76889f);
}

.start { display: grid; place-items: center; width: 54px; }
.start svg { width: 38px; height: 38px; }
.tasks { display: flex; gap: 2px; margin-left: 5px; }
.task { display: grid; place-items: center; width: 60px; border: 1px solid transparent; border-radius: 2px; }
.task svg { width: 32px; height: 32px; }
.task.active { border-color: #44576e; box-shadow: inset 0 0 0 1px #fff; background: linear-gradient(135deg, #e8edf4, #c8d8e8 60%, #dae6f0); }
.tray { display: flex; align-items: center; gap: 8px; margin-left: auto; }
.tray-more { margin-right: 4px; }
.tray-more svg { width: 8px; height: 5px; }
.clock { display: flex; flex-direction: column; justify-content: center; align-items: center; width: 72px; margin-left: 6px; font-family: "Noto Sans", "Open Sans", sans-serif; font-size: 11px; line-height: 17px; color: #fff; }
.show-desktop { width: 15px; border: 1px solid #4a5b70; box-shadow: inset 0 0 0 1px #a5b4c6; background: linear-gradient(120deg, #8c9db2, #56677c 60%, #76889d); }
```
